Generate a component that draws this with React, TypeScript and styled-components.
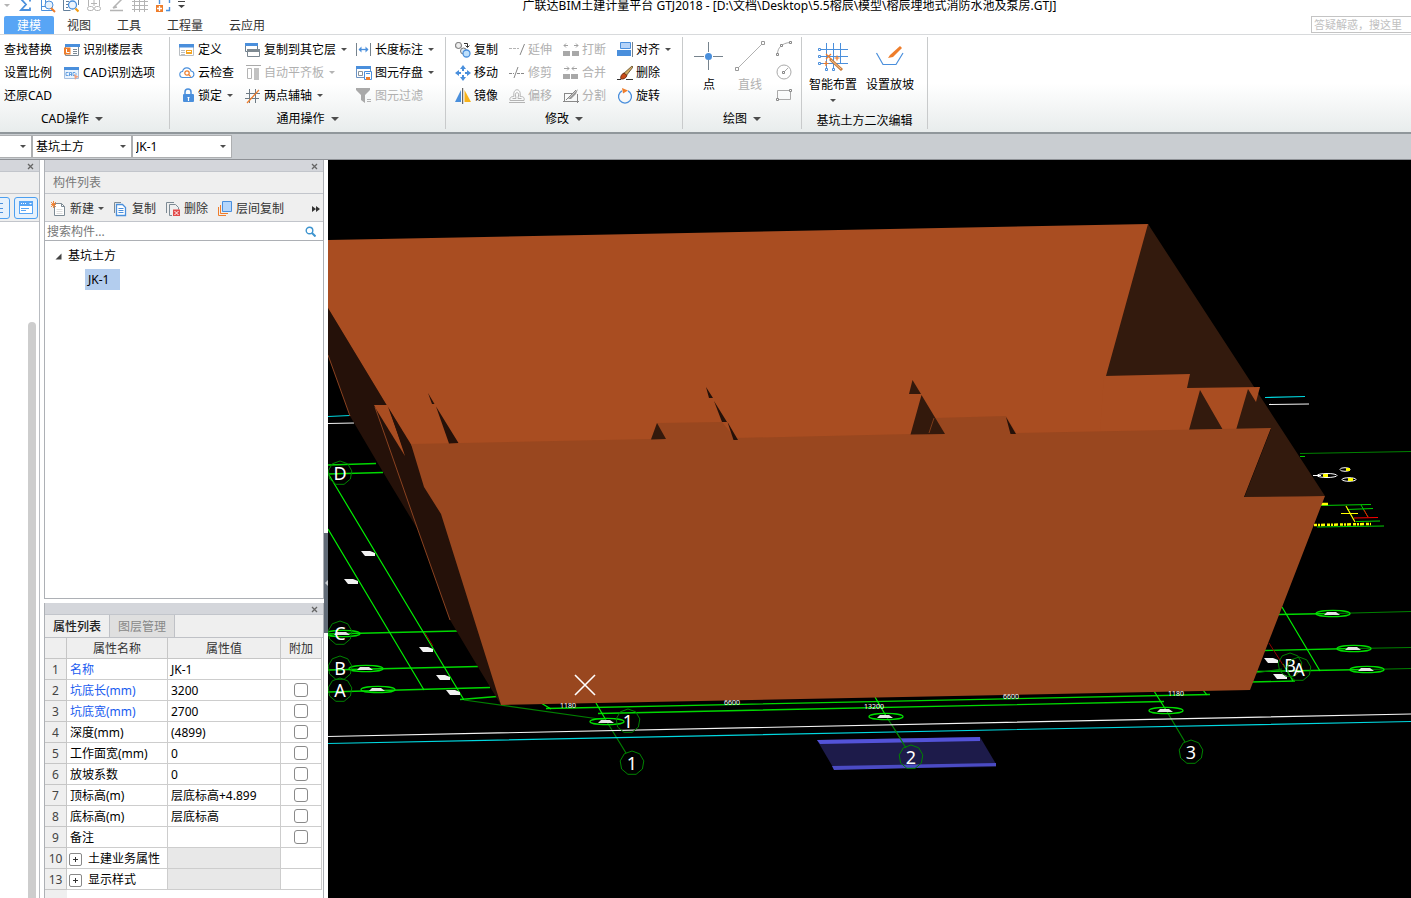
import React from "react";
import styled, { createGlobalStyle } from "styled-components";

const GlobalStyle = createGlobalStyle`
  *, *::before, *::after { box-sizing: border-box; }
  html, body { margin: 0; height: 100%; overflow: hidden; }
  body {
    background: #fff;
    color: #000;
    font: 12px/20px "Noto Sans", "Noto Sans CJK SC", sans-serif;
  }
  button, input, select { font: inherit; color: inherit; margin: 0; padding: 0; }
  button { background: none; border: 0; text-align: left; cursor: default; white-space: nowrap; }
  svg { display: block; flex: none; }
`;

const blue = "#4a8fdc";
const orange = "#ee7d2b";
const grey = "#b4b4b4";

/* ---------- shell ---------- */

const Shell = styled.div`
  display: flex;
  flex-direction: column;
  height: 100vh;
  overflow: hidden;
`;

const TitleBar = styled.header`
  display: flex;
  align-items: flex-end;
  height: 15px;
  flex: none;
`;

const QuickTools = styled.div`
  display: flex;
  align-items: center;
  gap: 7px;
  height: 20px;
  padding-left: 4px;
`;

const QuickButton = styled.button`
  display: flex;
  align-items: center;
  justify-content: center;
  height: 20px;
`;

const WindowTitle = styled.h1`
  flex: 1;
  margin: 0;
  padding-right: 17px;
  font-size: 12px;
  font-weight: 400;
  line-height: 18px;
  text-align: center;
  white-space: nowrap;
`;

const TabBar = styled.nav`
  display: flex;
  align-items: flex-end;
  height: 20px;
  flex: none;
  padding-left: 4px;
  border-bottom: 1px solid #d8dadc;
`;

const RibbonTab = styled.button<{ $active?: boolean }>`
  height: 18px;
  padding: 2px 13px 0;
  line-height: 16px;
  border-radius: 2px 2px 0 0;
  color: ${(p) => (p.$active ? "#fff" : "#333")};
  background: ${(p) => (p.$active ? "#58a5f5" : "transparent")};
`;

const HelpSearch = styled.input`
  width: 100px;
  height: 17px;
  margin: 0 0 1px auto;
  padding-left: 2px;
  border: 1px solid #c4c4c4;
  border-right: 0;
  border-radius: 0;
  font-size: 11px;
  &::placeholder { color: #c0c0c0; opacity: 1; }
`;

/* ---------- ribbon ---------- */

const Ribbon = styled.div`
  display: flex;
  height: 99px;
  flex: none;
  padding: 2px 0 3px;
  background: linear-gradient(#fff 50%, #e8ecec);
  border-bottom: 2px solid #90979b;
`;

const Group = styled.section<{ $width: number; $bleed?: boolean }>`
  display: flex;
  flex-direction: column;
  flex: none;
  width: ${(p) => p.$width}px;
  margin-left: ${(p) => (p.$bleed ? "-25px" : "0")};
  border-right: 1px solid #c8cacb;
`;

const GroupBody = styled.div<{ $columns: string; $pad: number }>`
  display: grid;
  grid-template-columns: ${(p) => p.$columns};
  grid-template-rows: repeat(3, 23px);
  grid-auto-flow: column;
  flex: none;
  padding: 1px 0 0 ${(p) => p.$pad}px;
`;

const GroupTitle = styled.button<{ $low?: boolean }>`
  display: flex;
  align-items: center;
  align-self: center;
  gap: 6px;
  height: 24px;
  flex: none;
  padding-top: ${(p) => (p.$low ? 4 : 0)}px;
`;

const Tool = styled.button`
  display: flex;
  align-items: center;
  gap: 3px;
  &:disabled { color: #b0b0b0; }
`;

const ToolLabel = styled.span`
  margin-right: 2px;
`;

const BigTools = styled.div<{ $pad: number; $gap: number }>`
  display: flex;
  gap: ${(p) => p.$gap}px;
  height: 70px;
  flex: none;
  padding-left: ${(p) => p.$pad}px;
`;

const BigTool = styled.button`
  display: flex;
  flex-direction: column;
  align-items: center;
  padding-top: 4px;
  &:disabled { color: #b0b0b0; }
`;

const BigLabel = styled.span`
  margin: 4px 0 4px;
`;

const SmallStack = styled.div`
  display: grid;
  grid-template-rows: repeat(3, 23px);
  align-items: center;
`;

/* ---------- selection bar ---------- */

const SelectBar = styled.div`
  display: flex;
  height: 26px;
  flex: none;
  padding-top: 1px;
  background: #c9cdd1;
  border-bottom: 1px solid #8e9196;
`;

const SelectBox = styled.label<{ $bleed?: boolean }>`
  display: grid;
  align-items: center;
  width: 100px;
  height: 23px;
  margin-left: ${(p) => (p.$bleed ? "-68px" : "0")};
  > * { grid-area: 1 / 1; }
  > svg { justify-self: end; margin-right: 6px; pointer-events: none; }
`;

const Select = styled.select`
  appearance: none;
  width: 100px;
  height: 23px;
  padding-left: 3px;
  background: #fff;
  border: 1px solid #adafb1;
  border-radius: 0;
`;

/* ---------- docked panels ---------- */

const Workspace = styled.main`
  display: flex;
  flex: 1;
  min-height: 0;
`;

const NavDock = styled.aside`
  display: flex;
  flex-direction: column;
  width: 40px;
  flex: none;
  overflow: hidden;
  border-right: 1px solid #b9bcc1;
`;

const Dock = styled.aside`
  display: flex;
  flex-direction: column;
  gap: 4px;
  width: 280px;
  margin-left: 4px;
  flex: none;
`;

const Panel = styled.section<{ $grow?: boolean }>`
  display: flex;
  flex-direction: column;
  flex: ${(p) => (p.$grow ? "1" : "none")};
  min-height: 0;
  border: 1px solid #adb0b5;
  border-top: 0;
  border-bottom-width: ${(p) => (p.$grow ? "1px" : "0")};
`;

const Strip = styled.div`
  display: flex;
  align-items: center;
  justify-content: flex-end;
  height: 12px;
  flex: none;
  padding: 2px 5px 0 0;
  background: #d4d6db;
  border-bottom: 1px solid #c2c5cb;
`;

const PanelTitle = styled.h2`
  height: 22px;
  flex: none;
  margin: 0;
  padding-left: 8px;
  font-size: 12px;
  font-weight: 400;
  line-height: 22px;
  color: #777;
  background: #efefef;
  border-bottom: 1px solid #c2c5cb;
`;

const PanelTools = styled.div`
  display: flex;
  align-items: center;
  height: 28px;
  flex: none;
  padding: 2px 0 0 6px;
  background: #efefef;
  border-bottom: 1px solid #c2c5cb;
  color: #333;
`;

const PanelTool = styled.button`
  display: flex;
  align-items: center;
  gap: 3px;
  margin-right: 9px;
`;

const ToolMenu = styled.span`
  padding-left: 1px;
`;

const MoreTools = styled.button`
  margin: 0 3px 0 auto;
`;

const NavTools = styled(PanelTools)`
  justify-content: flex-end;
  gap: 4px;
  padding: 0 1px 0 0;
`;

const NavToggle = styled.button`
  display: flex;
  align-items: center;
  justify-content: center;
  flex: none;
  width: 24px;
  height: 22px;
  background: #e6f1fc;
  border: 1px solid #4c9ff0;
  border-radius: 3px;
`;

const ScrollThumb = styled.div`
  flex: 1;
  width: 8px;
  margin: 100px 3px 0 auto;
  background: #cdcdcd;
  border-radius: 4px 4px 0 0;
`;

const SearchRow = styled.label`
  display: flex;
  align-items: center;
  height: 19px;
  flex: none;
  padding: 0 7px 0 2px;
  border-bottom: 1px solid #adb0b5;
`;

const SearchInput = styled.input`
  flex: 1;
  min-width: 0;
  height: 18px;
  padding-top: 2px;
  border: 0;
  outline: 0;
  &::placeholder { color: #777; opacity: 1; }
`;

const Tree = styled.ul`
  flex: 1;
  margin: 0;
  padding: 5px 0 0 10px;
  list-style: none;
`;

const TreeNode = styled.li`
  display: flex;
  align-items: center;
  gap: 6px;
  height: 20px;
`;

const TreeLeaf = styled.li`
  width: 35px;
  height: 21px;
  margin: 3px 0 0 30px;
  padding-left: 3px;
  line-height: 21px;
  background: #b3cdee;
`;

const SheetTabs = styled.div`
  display: flex;
  height: 22px;
  flex: none;
  background: #efefef;
`;

const SheetTab = styled.button<{ $active?: boolean }>`
  width: 65px;
  padding: 2px 0 0 8px;
  line-height: 20px;
  border-right: 1px solid #bfc1c6;
  font-weight: ${(p) => (p.$active ? 500 : 400)};
  color: ${(p) => (p.$active ? "#222" : "#888")};
  background: ${(p) => (p.$active ? "#efefef" : "#dfdfdf")};
`;

const SheetBody = styled.div`
  padding-bottom: 8px;
  border-top: 1px solid #bfc1c6;
  background: linear-gradient(to right, #efefef 22px, #fff 22px);
`;

const Sheet = styled.table`
  width: 277px;
  table-layout: fixed;
  border-collapse: separate;
  border-spacing: 0;
  background: #fff;
`;

const HeadCell = styled.th`
  height: 21px;
  padding: 2px 0 0;
  font-weight: 400;
  line-height: 18px;
  color: #333;
  background: #efefef;
  border: solid #c6c6c6;
  border-width: 0 1px 1px 0;
`;

const NumberCell = styled(HeadCell)`
  color: #444;
`;

const Cell = styled.td<{ $link?: boolean; $muted?: boolean }>`
  height: 21px;
  padding: 2px 0 0 3px;
  line-height: 18px;
  white-space: nowrap;
  color: ${(p) => (p.$link ? "#1a5cf0" : "#000")};
  background: ${(p) => (p.$muted ? "#e8e8e8" : "#fff")};
  border: solid #cdcdcd;
  border-width: 0 1px 1px 0;
`;

const CheckCell = styled(Cell)`
  padding-top: 0;
`;

const CheckBox = styled.input`
  display: block;
  appearance: none;
  width: 14px;
  height: 14px;
  margin: 0 0 0 10px;
  border: 1px solid #8a8a8a;
  border-radius: 3px;
  background: #fff;
`;

const ExpandRow = styled.div`
  display: flex;
  align-items: center;
  gap: 6px;
  margin-left: -1px;
`;

const ExpandButton = styled.button`
  display: flex;
  align-items: center;
  justify-content: center;
  width: 13px;
  height: 13px;
  border: 1px solid #888;
  border-radius: 2px;
`;

const Splitter = styled.div`
  width: 4px;
  flex: none;
  padding-top: 373px;
`;

const SplitHandle = styled.button`
  display: flex;
  align-items: center;
  justify-content: flex-end;
  width: 4px;
  height: 100px;
  background: #616b77;
`;

const Viewport = styled.div`
  flex: 1;
  min-width: 0;
  background: #000;
  > svg { width: 100%; height: 100%; }
`;

/* ---------- icons ---------- */

const Ico = ({ s = 16, children }: { s?: number; children: React.ReactNode }) => (
  <svg width={s} height={s} viewBox={`0 0 ${s} ${s}`} fill="none" aria-hidden="true">
    {children}
  </svg>
);

const Arrow = ({ big, light }: { big?: boolean; light?: boolean }) => (
  <svg width={big ? 8 : 6} height={big ? 4 : 3} viewBox="0 0 8 4" aria-hidden="true">
    <path d="M0 0h8L4 4z" fill={light ? grey : "#4d4d4d"} />
  </svg>
);

const CloseIcon = () => (
  <svg width="7" height="7" viewBox="0 0 7 7" stroke="#666" strokeWidth="1.3" aria-hidden="true">
    <path d="M1 1l5 5M6 1L1 6" />
  </svg>
);

const icons: Record<string, React.ReactNode> = {
  find: <path d="M1 3h14v10H1z" fill={blue} />,
  scale: <path d="M1 3h11v10H1z" stroke={blue} />,
  restore: <path d="M1 3h11v10H1z" stroke={blue} />,
  floors: (
    <>
      <path d="M1.500 2.500h13v11h-13z" stroke="#7d8a94" fill="#fff" />
      <path d="M1 2h15v3H1z" fill={blue} />
      <path d="M-.5 5.500h7v7h-7z" fill={orange} />
      <path d="M2.500 7v3.500h3" stroke="#fff" />
      <path d="M9 7.500h4M9 9.500h4M9 11.500h4" stroke="#7d8a94" />
    </>
  ),
  cadopt: (
    <>
      <path d="M.5 2.500h14v11H.5z" stroke="#a5bfe0" fill="#eaf3fd" />
      <path d="M0 2h15v3H0z" fill={blue} />
      <path d="M4.500 7.500H2v3h2.500M5.500 11V7.500h2V11M5.500 9.500h2M9 7.500h2l1 1v1l-1 1H9z" stroke={blue} strokeWidth=".8" />
      <path d="M10 9l5 3-2.500.7L11 15z" fill="#f0a080" />
    </>
  ),
  define: (
    <>
      <path d="M.5 2.500h14v11H.5z" stroke="#b9bec2" fill="#fff" />
      <path d="M0 2h15v3.500H0z" fill={blue} />
      <path d="M2 8.500h4M2 10.500h4M2 12.500h4" stroke="#b9bec2" />
      <path d="M7 8h6v4H7z" fill="#f5a623" />
      <path d="M8 9.500h4" stroke="#fff" />
    </>
  ),
  cloud: (
    <>
      <path d="M4 12.500a3 3 0 0 1-.4-6A4.300 4.300 0 0 1 12 6a3.300 3.300 0 0 1 .3 6.500z" stroke={blue} strokeWidth="1.100" />
      <circle cx="8" cy="8" r="2.200" stroke={orange} strokeWidth="1.200" />
      <path d="M9.700 9.700l2 2" stroke={orange} strokeWidth="1.200" />
    </>
  ),
  lock: (
    <>
      <path d="M6 7V4a3 3 0 0 1 6 0V7" stroke={blue} strokeWidth="1.500" />
      <rect x="4" y="6" width="11" height="8" rx="1" fill={blue} />
      <path d="M9.500 9v4M8.500 9.500h2" stroke="#fff" strokeWidth="1.200" />
    </>
  ),
  copyLayers: (
    <>
      <path d="M.5 1.500h12v8H.5z" stroke="#6e7f8e" fill="#fff" />
      <path d="M0 1h13v3H0z" fill={blue} />
      <path d="M2.500 7.500h12v7h-12z" stroke="#7b8791" fill="#fff" />
      <path d="M2 7h13v3H2z" fill="#7f8a92" />
    </>
  ),
  alignSlab: (
    <>
      <path d="M1 .5h15" stroke="#aaa" />
      <path d="M2.500 3.500h4v10h-4z" stroke="#b4b4b4" />
      <path d="M9 3h5v12H9z" fill="#c2c2c2" />
    </>
  ),
  axis: (
    <>
      <path d="M4.500 1v14M10.500 1v14M1 5.500h14M0 10.500h14" stroke="#6d7a84" />
      <path d="M2 15L14 2" stroke={orange} strokeWidth="1.200" />
    </>
  ),
  length: (
    <>
      <path d="M.5 1v13M14.500 1v13" stroke="#76838d" />
      <path d="M3 7.500h9" stroke={blue} strokeWidth="1.300" />
      <path d="M5.500 4.500l-3 3 3 3zM9.500 4.500l3 3-3 3z" fill={blue} />
    </>
  ),
  saveElem: (
    <>
      <path d="M.5 2.500h14v10H.5z" stroke="#6b93c4" fill="#fff" />
      <path d="M0 1h15v3H0z" fill={blue} />
      <path d="M2.500 6.500h4v4h-4z" stroke="#8a949c" />
      <path d="M8.500 6.500h7v8h-7z" stroke={blue} fill="#fff" />
      <path d="M10 12h4v3h-4z" fill={orange} />
      <path d="M10 8.500h4" stroke={blue} />
    </>
  ),
  filter: (
    <>
      <path d="M0 0h14v2L9 7v8L5 12V7L0 2z" fill="#a9a9a9" />
      <path d="M11 11.500h4M11 13.500h4" stroke="#b4b4b4" />
    </>
  ),
  copy: (
    <>
      <circle cx="3.500" cy="3.500" r="3" stroke="#888" strokeWidth="1.200" fill="#eee" />
      <circle cx="8.500" cy="9" r="3" stroke="#777" fill="#dfe9f2" />
      <circle cx="11.500" cy="11.500" r="3.500" stroke={blue} strokeWidth="1.300" fill="#bfe0fb" />
      <path d="M9 1.500h3.500V5M10.500 3.500l2 2 2-2" stroke="#333" />
    </>
  ),
  move: (
    <path
      d="M8 0l3 4H9v2H7V4H5zM8 16l-3-4h2v-2h2v2h2zM0 8l4-3v2h2v2H4v2zM16 8l-4 3V9h-2V7h2V5z"
      fill={blue}
    />
  ),
  mirror: (
    <>
      <path d="M6 2v12H0z" fill={blue} />
      <path d="M9.500 2v12H16z" fill="#f9b31a" />
      <path d="M7.700 0v16" stroke="#444" />
    </>
  ),
  extend: (
    <>
      <path d="M0 6.500h10" stroke={grey} strokeDasharray="3 1" />
      <path d="M15.500 2l-4.500 11" stroke="#888" />
    </>
  ),
  trim: (
    <>
      <path d="M0 8.500h5M8 8.500h8" stroke="#888" strokeDasharray="3 1" />
      <path d="M9 2L5 13" stroke="#888" />
    </>
  ),
  offset: (
    <>
      <path d="M1 12.500c-1-4 3-4 4-4-2-9 8-9 6 0 2 0 5 0 4 4z" stroke={grey} />
      <path d="M3.500 10.500h3.500c0-2-1-3-.5-5 .7-1 2.300-1 3 0 .5 2-.5 3-.5 5h3.500M0 14.500h16" stroke={grey} />
    </>
  ),
  breakUp: (
    <>
      <path d="M0 9h7v5H0zM9 9h7v5H9z" fill="#a8a8a8" />
      <path d="M1 3.500h4M11 3.500h4M3 1.500l-2 2 2 2M13 1.500l2 2-2 2" stroke="#a0a0a0" />
    </>
  ),
  merge: (
    <>
      <path d="M0 9h7v5H0zM8 9h7v5H8z" fill="#a8a8a8" />
      <path d="M1 3.500h5M9 3.500h5M4 1.500l2 2-2 2M11 1.500l-2 2 2 2" stroke="#a0a0a0" />
    </>
  ),
  split: (
    <>
      <path d="M1 5.500h9M1.500 5v8M0 13.500h16M14.500 6v9M3 12L13 2" stroke="#888" />
      <path d="M5 11l6-6 4-4-2 5-5 5z" fill="#999" />
    </>
  ),
  align: (
    <>
      <path d="M3.500.5h10v6h-10z" stroke={blue} fill="#b5d3f8" />
      <path d="M0 8h14v6H0z" fill={blue} />
      <path d="M15.500 0v15" stroke="#76838d" />
    </>
  ),
  erase: (
    <>
      <path d="M0 14.500h4M9 14.500h7" stroke="#333" />
      <path d="M15 1l1 1-7 9-3-2z" fill="#d0a860" stroke="#5c4522" strokeWidth=".8" />
      <path d="M7 8l3 2.500c-1 3-4 4-6 3.500-1-1 0-5 3-6z" fill="#c94a17" stroke="#5a260f" strokeWidth=".8" />
    </>
  ),
  rotate: (
    <>
      <path d="M11 2.800a6.500 6.500 0 1 1-6 0" stroke={blue} strokeWidth="1.300" />
      <path d="M5 0l6 2.500L6 5.500z" fill={orange} />
    </>
  ),
  arc: (
    <>
      <path d="M1.500 13C1.500 7 6 2 14 1.500" stroke="#a8a8a8" />
      <path d="M.5 12.500h2v2h-2zM4.500 3.500h2v2h-2zM13.500.5h2v2h-2z" stroke="#888" fill="#fff" />
    </>
  ),
  circle: (
    <>
      <circle cx="8" cy="8" r="7" stroke="#aaa" />
      <path d="M8 8l4-4" stroke="#aaa" />
      <path d="M6.500 7.500h2v2h-2z" stroke="#888" fill="#fff" />
    </>
  ),
  rect: (
    <>
      <path d="M1.500 3.500h13v9h-13z" stroke="#aaa" />
      <path d="M.5 11.500h2v2h-2zM13.500 2.500h2v2h-2z" stroke="#888" fill="#fff" />
    </>
  ),
  sum: <path d="M13 4.500V2H4l5 5.500L4 13h9v-2.500" stroke={blue} strokeWidth="1.800" />,
  view: (
    <>
      <path d="M1.500 1v12.500h12M5.500 1v8M1 9.500h5" stroke={blue} />
      <circle cx="9" cy="8" r="4" stroke={blue} fill="#e6f1fc" />
      <path d="M11 11l4 4" stroke={orange} strokeWidth="2" />
    </>
  ),
  inspect: (
    <>
      <path d="M.5 1v12.500h7M15.500 1v7M3 4.500h3M3 7.500h2M3 10.500h2" stroke="#64809c" />
      <circle cx="9.500" cy="8" r="4" stroke={blue} strokeWidth="1.300" fill="#eef5fd" />
      <path d="M12.500 11.500l3 3" stroke="#f39c12" strokeWidth="2.200" />
    </>
  ),
  link: (
    <>
      <path d="M2.500 1v8M13.500 1v8M5 6.500h6M8 2v7" stroke={grey} />
      <rect x="1.500" y="9.500" width="6" height="4" rx="2" stroke={grey} />
      <rect x="8.500" y="9.500" width="6" height="4" rx="2" stroke={grey} />
    </>
  ),
  level: <path d="M1 13.500h13M4 11l9-9M4 11l4-1" stroke={grey} strokeWidth="1.500" />,
  grid: <path d="M2.500 0v15M7.500 0v15M12.500 0v15M0 4.500h16M0 8.500h16M0 12.500h16" stroke={grey} />,
  add: (
    <>
      <path d="M4.500 7V2.500M11 13.500h3.500V10M14.500 6V1.500H11" stroke={blue} strokeWidth="1.400" />
      <path d="M1 8h7v7H1z" fill={orange} />
      <path d="M4.500 9v5M2 11.500h5" stroke="#fff" strokeWidth="1.300" />
    </>
  ),
  newDoc: (
    <>
      <path d="M3.500 2.500h7l3 3v9h-10z" stroke="#7d8a94" fill="#fff" />
      <path d="M10.500 2.500v3h3" stroke="#7d8a94" />
      <path d="M5.500 8.500h6M5.500 10.500h6M5.500 12.500h6" stroke="#ddd" />
      <path d="M0 1l5 5M5 1L0 6M2.500 0v7M0 3.500h5" stroke={orange} strokeWidth=".9" />
    </>
  ),
  copyDoc: (
    <>
      <path d="M1.500 12V1.500H8" stroke="#7d8a94" />
      <path d="M3.500 3.500h6l3 3v8h-9z" stroke={blue} fill="#fff" strokeWidth="1.300" />
      <path d="M5.500 7.500h5M5.500 9.500h5M5.500 11.500h5" stroke={blue} />
    </>
  ),
  deleteDoc: (
    <>
      <path d="M1.500 12V1.500H9M4.500 14.500v-11h6l3 3v2M4.500 14.500H7" stroke="#7d8a94" />
      <path d="M8 8.500h7V15H8z" fill="#e24b4b" />
      <path d="M9.500 10l4 4M13.500 10l-4 4" stroke="#fff" />
    </>
  ),
  layerCopy: (
    <>
      <path d="M1.500 6v8.500H9M3.500 4v8.500H11" stroke={orange} />
      <path d="M5.500.5h9v10h-9z" stroke={blue} fill="#b5d6fb" />
    </>
  ),
};

const Icon = ({ name }: { name: string }) => <Ico>{icons[name]}</Ico>;

/* ---------- data ---------- */

type ToolDef = [icon: string, label: string, opts?: { menu?: boolean; off?: boolean }];

const cadTools: ToolDef[] = [
  ["find", "查找替换"],
  ["scale", "设置比例"],
  ["restore", "还原CAD"],
  ["floors", "识别楼层表"],
  ["cadopt", "CAD识别选项"],
];

const commonTools: ToolDef[] = [
  ["define", "定义"],
  ["cloud", "云检查"],
  ["lock", "锁定", { menu: true }],
  ["copyLayers", "复制到其它层", { menu: true }],
  ["alignSlab", "自动平齐板", { menu: true, off: true }],
  ["axis", "两点辅轴", { menu: true }],
  ["length", "长度标注", { menu: true }],
  ["saveElem", "图元存盘", { menu: true }],
  ["filter", "图元过滤", { off: true }],
];

const editTools: ToolDef[] = [
  ["copy", "复制"],
  ["move", "移动"],
  ["mirror", "镜像"],
  ["extend", "延伸", { off: true }],
  ["trim", "修剪", { off: true }],
  ["offset", "偏移", { off: true }],
  ["breakUp", "打断", { off: true }],
  ["merge", "合并", { off: true }],
  ["split", "分割", { off: true }],
  ["align", "对齐", { menu: true }],
  ["erase", "删除"],
  ["rotate", "旋转"],
];

const Tools = ({ items }: { items: ToolDef[] }) => (
  <>
    {items.map(([icon, label, o]) => (
      <Tool key={label} disabled={o?.off}>
        <Icon name={icon} />
        <ToolLabel>{label}</ToolLabel>
        {o?.menu && <Arrow light={o.off} />}
      </Tool>
    ))}
  </>
);

interface PropRow {
  n: number;
  name: string;
  value?: string;
  link?: boolean;
  check?: boolean;
  expand?: boolean;
}

const rows: PropRow[] = [
  { n: 1, name: "名称", value: "JK-1", link: true },
  { n: 2, name: "坑底长(mm)", value: "3200", link: true, check: true },
  { n: 3, name: "坑底宽(mm)", value: "2700", link: true, check: true },
  { n: 4, name: "深度(mm)", value: "(4899)", check: true },
  { n: 5, name: "工作面宽(mm)", value: "0", check: true },
  { n: 6, name: "放坡系数", value: "0", check: true },
  { n: 7, name: "顶标高(m)", value: "层底标高+4.899", check: true },
  { n: 8, name: "底标高(m)", value: "层底标高", check: true },
  { n: 9, name: "备注", check: true },
  { n: 10, name: "土建业务属性", expand: true },
  { n: 13, name: "显示样式", expand: true },
];

/* ---------- 3D scene ---------- */

const G = "#00f000";
const DG = "#008400";

type Seg = [number, number, number, number];

const axisLines: Seg[] = [
  [328, 465, 376, 463.5],
  [328, 474, 383, 472.5],
  [328, 634, 457, 631],
  [328, 670, 478, 666.5],
  [328, 692, 490, 687.5],
  [460, 699.5, 497, 696.5],
  [546, 708.5, 1210, 694.5],
  [598, 713.5, 1164, 701.5],
  [1278, 614.5, 1333, 613.5],
  [1264, 650.5, 1354, 648.5],
  [1255, 671.5, 1367, 669.5],
  [1250, 682, 1295, 681],
];

const diagonals: Seg[] = [
  [329, 475, 464, 700],
  [328, 529, 424, 690],
  [541, 703, 551, 709],
  [1282, 607, 1320, 671],
  [1203, 690, 1207, 695],
  [596, 703, 607, 722],
  [875, 697, 886, 716],
  [1154, 691, 1166, 710],
  [1283, 664, 1293, 681],
];

const leaders: Seg[] = [
  [464, 700, 606, 720],
  [607, 722, 626, 753],
  [886, 716, 906, 747],
  [1166, 710, 1185, 742],
  [1300, 453.5, 1411, 451.5],
  [1255, 673, 1282, 669],
  [1333, 613.5, 1411, 611.5],
  [1354, 648.5, 1411, 647.5],
  [1367, 669.5, 1411, 668.5],
];

const ellipses: [number, number][] = [
  [343, 633],
  [366, 668],
  [378, 689],
  [607, 721],
  [886, 716],
  [1166, 710],
  [1333, 613],
  [1354, 648],
  [1367, 669],
];

const bubbles: [number, number, string][] = [
  [340, 473, "D"],
  [340, 633, "C"],
  [340, 668, "B"],
  [340, 690, "A"],
  [628, 721, "1"],
  [632, 763, "1"],
  [911, 757, "2"],
  [1191, 752, "3"],
  [1290, 665, "B"],
  [1299, 669, "A"],
];

const marks: [number, number][] = [
  [368, 554],
  [351, 582],
  [426, 650],
  [443, 678],
  [453, 693],
  [1271, 661],
  [1280, 677],
];

const dims: [number, number, string][] = [
  [568, 708, "1180"],
  [732, 705, "6600"],
  [874, 709, "13200"],
  [1011, 699, "6600"],
  [1176, 696, "1180"],
];

const seg = ([x1, y1, x2, y2]: Seg) => `M${x1} ${y1}L${x2} ${y2}`;
const path = (list: Seg[]) => list.map(seg).join("");

const nonagon = (cx: number, cy: number) =>
  Array.from({ length: 9 }, (_, i) => {
    const a = (i * 2 * Math.PI) / 9 - Math.PI / 2;
    return `${(cx + 12 * Math.cos(a)).toFixed(1)},${(cy + 12 * Math.sin(a)).toFixed(1)}`;
  }).join(" ");

const Scene = () => (
  <svg viewBox="328 160 1083 738" preserveAspectRatio="xMinYMin slice" fill="none" role="img" aria-label="基坑土方三维视图">
    <path d={path(axisLines)} stroke="#00d800" strokeWidth="1.300" />
    <path d={path(diagonals)} stroke={G} strokeWidth="1.200" />
    <path d={path(leaders)} stroke="#008000" strokeWidth="1.200" />
    <path d="M425 633l8 13M1269 643l16 25" stroke="#900000" />
    <path d="M328 416.500L350 415.500M1265 397.500l40-1M328 743.500L1411 721.500" stroke="#00d8e0" strokeWidth="1.200" />
    <path d="M328 423.500l26-.5M1269 404.500l40-.5M328 736.500L1411 714" stroke="#f4f4f4" strokeWidth="1.200" />
    <path d="M1320 505.500l51-1M1347 509.500l26-1M1361 505l7 12M1356 521.500l24-.5M1317 527l67-1M1300 456.500h5" stroke="#00d000" />
    <path d="M1354 518l24-.5M1364 510l4 7" stroke="#f00" />
    <path d="M1346 506l9 16M1341 513.500h17" stroke="#ff0" strokeWidth="1.200" />
    <path d="M1314 525l57-1" stroke="#ff0" strokeWidth="2.500" strokeDasharray="3 1 2 1 4 2" />
    <path d="M1320 504h8" stroke="#ff0" strokeWidth="2.500" />
    <path d="M1313 475.500h8" stroke="#fff" />
    <ellipse cx="1345" cy="469.500" rx="5" ry="1.800" stroke="#fff" />
    <ellipse cx="1327" cy="475.500" rx="10" ry="2" stroke="#fff" />
    <ellipse cx="1349" cy="479.500" rx="7" ry="1.800" stroke="#fff" />
    <path d="M1346 469.500h4M1323 475.500h5M1348 479.500h5" stroke="#ff0" strokeWidth="3" />

    <path d="M817 740L980 737L996 764V767L834 769z" fill="#1d1b4a" />
    <path d="M817 740L980 737V741L820 744z" fill="#5353d8" />
    <path d="M832 766L996 763V766L834 770z" fill="#4b4bc4" />
    <path d="M895 730L906 748" stroke="#008000" strokeWidth="1.200" />

    {ellipses.map(([x, y]) => (
      <g key={`${x}-${y}`}>
        <ellipse cx={x} cy={y + 0.5} rx="17" ry="3.2" stroke="#00e000" strokeWidth="1.300" />
        <path d={`M${x - 9} ${y + 2}l3-3h9l4 3z`} fill="#e4e4e4" />
      </g>
    ))}
    {marks.map(([x, y]) => (
      <path key={`${x}-${y}`} d={`M${x - 7} ${y - 3}h9l5 2v3h-10z`} fill="#f2f2f2" />
    ))}

    {/* pit shell: left slope, back faces, right slope, front face */}
    <path d="M328 308V355L350 416L383 472L418 530L450 620L478 667L501 705L460 500L411 440L386 404z" fill="#251109" />
    <path d="M328 240L1148 224L1240 430L411 446L386 404L328 308z" fill="#a94d21" />
    <path d="M374 405H387L389 408L405 456L376 409z" fill="#a94d21" />
    <path d="M388 407L412 446L406 456z" fill="#251109" />
    <path d="M328 355L350 416M375 407L418 530L450 620" stroke="#8a4220" />
    <path d="M1148 224L1325 496L1244 498L1271 429L1180 430L1106 376z" fill="#331a0d" />
    <path d="M1104 376L1190 374L1187 388L1260 387L1256 402L1248 389L1236 430L1223 430L1200 390L1189 430L1100 432z" fill="#a94d21" />
    <path
      d="M411 444L651 439L657 423L722 422L735 438L911 434L934 418L1006 416L1016 433L1271 428L1244 497L1325 496L1250 690L501 705L441 514L424 487z"
      fill="#99471f"
    />
    <path
      d="M657 423L651 439.500L666 439zM912.500 380L909 394H921zM921.500 395L910.500 434.500L945 434z"
      fill="#33190c"
    />
    <path
      d="M706 387L709 398H713zM714 401L722 422H727zM727.500 422L733.500 440H738zM1006 417L1010.500 434H1016zM428 393L432 404H434.500zM436 406.500L449 443.500L458.500 443z"
      fill="#251109"
    />
    <path d="M934 418L929 433" stroke="#7a3a19" />

    <path d="M575 675l20 20M595 675l-20 20" stroke="#fff" strokeWidth="1.600" />

    <g fontFamily='"Noto Sans", sans-serif' textAnchor="middle" fill="#fff">
      {dims.map(([x, y, t]) => (
        <text key={x} x={x} y={y} fontSize="7">
          {t}
        </text>
      ))}
      {bubbles.map(([x, y, t]) => (
        <g key={`${x}-${y}`}>
          <polygon points={nonagon(x, y)} stroke={DG} fill="none" />
          <text x={x} y={y + 7} fontSize="18">
            {t}
          </text>
        </g>
      ))}
    </g>
  </svg>
);

/* ---------- page ---------- */

const quick = ["sum", "view", "inspect", "link", "level", "grid", "add"];
const tabs = ["建模", "视图", "工具", "工程量", "云应用"];

const Combo = ({ label, value, bleed }: { label: string; value: string; bleed?: boolean }) => (
  <SelectBox $bleed={bleed}>
    <Select aria-label={label} defaultValue={value}>
      <option>{value}</option>
    </Select>
    <Arrow />
  </SelectBox>
);

export default function App() {
  return (
    <Shell>
      <GlobalStyle />
      <TitleBar>
        <QuickTools>
          <QuickButton aria-label="更多">
            <Arrow light />
          </QuickButton>
          {quick.map((q) => (
            <QuickButton key={q} aria-label={q}>
              <Icon name={q} />
            </QuickButton>
          ))}
          <QuickButton aria-label="自定义">
            <svg width="7" height="8" viewBox="0 0 7 8" aria-hidden="true">
              <path d="M0 0h7v1H0zM0 4h7L3.500 7z" fill="#444" />
            </svg>
          </QuickButton>
        </QuickTools>
        <WindowTitle>
          {"广联达BIM土建计量平台 GTJ2018 - [D:\\文档\\Desktop\\5.5榕辰\\模型\\榕辰埋地式消防水池及泵房.GTJ]"}
        </WindowTitle>
      </TitleBar>

      <TabBar>
        {tabs.map((t, i) => (
          <RibbonTab key={t} $active={i === 0}>
            {t}
          </RibbonTab>
        ))}
        <HelpSearch aria-label="答疑解惑" placeholder="答疑解惑，搜这里" />
      </TabBar>

      <Ribbon>
        <Group $width={195} $bleed>
          <GroupBody $columns="79px 1fr" $pad={10}>
            <Tools items={cadTools} />
          </GroupBody>
          <GroupTitle>
            CAD操作 <Arrow big />
          </GroupTitle>
        </Group>
        <Group $width={276}>
          <GroupBody $columns="66px 111px 1fr" $pad={9}>
            <Tools items={commonTools} />
          </GroupBody>
          <GroupTitle>
            通用操作 <Arrow big />
          </GroupTitle>
        </Group>
        <Group $width={237}>
          <GroupBody $columns="54px 54px 54px 1fr" $pad={9}>
            <Tools items={editTools} />
          </GroupBody>
          <GroupTitle>
            修改 <Arrow big />
          </GroupTitle>
        </Group>
        <Group $width={119}>
          <BigTools $pad={11} $gap={11}>
            <BigTool>
              <Ico s={30}>
                <path d="M14.500 1v10M14.500 19v10M0 15.500h10M19 15.500h10" stroke="#76838d" />
                <circle cx="14.500" cy="15.500" r="3.500" fill={blue} />
              </Ico>
              <BigLabel>点</BigLabel>
            </BigTool>
            <BigTool disabled>
              <Ico s={30}>
                <path d="M3 27L27 3" stroke="#b0b0b0" />
                <path d="M.5 26.500h3v3h-3zM26.500.5h3v3h-3z" stroke="#999" fill="#fff" />
              </Ico>
              <BigLabel>直线</BigLabel>
            </BigTool>
            <SmallStack>
              <Tool disabled aria-label="弧线">
                <Icon name="arc" />
              </Tool>
              <Tool disabled aria-label="圆">
                <Icon name="circle" />
              </Tool>
              <Tool disabled aria-label="矩形">
                <Icon name="rect" />
              </Tool>
            </SmallStack>
          </BigTools>
          <GroupTitle>
            绘图 <Arrow big />
          </GroupTitle>
        </Group>
        <Group $width={126}>
          <BigTools $pad={7} $gap={9}>
            <BigTool>
              <Ico s={30}>
                <path d="M2 8.500h28M2 15.500h28M2 22.500h28M8.500 2v26M15.500 2v26M22.500 2v20" stroke={blue} />
                <path d="M.5 7.500h2v2h-2zM.5 14.500h2v2h-2zM.5 21.500h2v2h-2zM7.500 27.500h2v2h-2zM14.500 27.500h2v2h-2z" stroke={blue} fill="#fff" />
                <path d="M12 18l12 11" stroke="#c77d3e" strokeWidth="3" />
                <path d="M13 19l10 9" stroke="#f6c391" />
                <path d="M8 13l5 5M13 13l-5 5M19 14.500v5M16.500 17h5M8 20v5M5.500 22.500h5" stroke={orange} strokeWidth="1.200" />
              </Ico>
              <BigLabel>智能布置</BigLabel>
              <Arrow />
            </BigTool>
            <BigTool>
              <Ico s={30}>
                <path d="M1.500 12L8 23.500h13L28 12" stroke={blue} strokeWidth="1.200" />
                <path d="M25 5l2 2-9 9-5 1 2-3z" fill={orange} />
              </Ico>
              <BigLabel>设置放坡</BigLabel>
            </BigTool>
          </BigTools>
          <GroupTitle $low>基坑土方二次编辑</GroupTitle>
        </Group>
      </Ribbon>

      <SelectBar>
        <Combo label="楼层" value="" bleed />
        <Combo label="构件类型" value="基坑土方" />
        <Combo label="构件" value="JK-1" />
      </SelectBar>

      <Workspace>
        <NavDock>
          <Strip>
            <button aria-label="关闭">
              <CloseIcon />
            </button>
          </Strip>
          <PanelTitle />
          <NavTools>
            <NavToggle aria-label="列表">
              <Ico>
                <path d="M4 3.500h9M4 8.500h9M4 12.500h9" stroke={blue} />
              </Ico>
            </NavToggle>
            <NavToggle aria-label="卡片">
              <Ico>
                <path d="M1 1h14v13H1z" fill="#58a5f5" />
                <path d="M2 6h12v7H2z" fill="#fff" />
                <path d="M3 3.500h6" stroke="#fff" strokeDasharray="1 1" />
                <path d="M11 3h3l-1.500 1.500z" fill="#fff" />
                <path d="M3 8.500h8M3 10.500h5" stroke="#58a5f5" />
              </Ico>
            </NavToggle>
          </NavTools>
          <ScrollThumb />
        </NavDock>

        <Dock>
          <Panel $grow>
            <Strip>
              <button aria-label="关闭">
                <CloseIcon />
              </button>
            </Strip>
            <PanelTitle>构件列表</PanelTitle>
            <PanelTools>
              <PanelTool>
                <Icon name="newDoc" />
                新建
                <ToolMenu>
                  <Arrow />
                </ToolMenu>
              </PanelTool>
              <PanelTool>
                <Icon name="copyDoc" />
                复制
              </PanelTool>
              <PanelTool>
                <Icon name="deleteDoc" />
                删除
              </PanelTool>
              <PanelTool>
                <Icon name="layerCopy" />
                层间复制
              </PanelTool>
              <MoreTools aria-label="更多">
                <svg width="8" height="6" viewBox="0 0 8 6" aria-hidden="true">
                  <path d="M0 0l4 3-4 3zM4 0l4 3-4 3z" fill="#333" />
                </svg>
              </MoreTools>
            </PanelTools>
            <SearchRow>
              <SearchInput aria-label="搜索构件" placeholder="搜索构件..." />
              <svg width="11" height="11" viewBox="0 0 11 11" fill="none" aria-hidden="true">
                <circle cx="4.500" cy="4.500" r="3.300" stroke="#3d94cf" strokeWidth="1.400" />
                <path d="M7 7l3.500 3.500" stroke="#3d94cf" strokeWidth="2" />
              </svg>
            </SearchRow>
            <Tree>
              <TreeNode>
                <svg width="7" height="7" viewBox="0 0 7 7" aria-hidden="true">
                  <path d="M6.500.5v6h-6z" fill="#444" />
                </svg>
                基坑土方
              </TreeNode>
              <TreeLeaf>JK-1</TreeLeaf>
            </Tree>
          </Panel>

          <Panel>
            <Strip>
              <button aria-label="关闭">
                <CloseIcon />
              </button>
            </Strip>
            <SheetTabs>
              <SheetTab $active>属性列表</SheetTab>
              <SheetTab>图层管理</SheetTab>
            </SheetTabs>
            <SheetBody>
              <Sheet>
                <colgroup>
                  <col width="22" />
                  <col width="101" />
                  <col width="113" />
                  <col width="41" />
                </colgroup>
                <thead>
                  <tr>
                    <HeadCell />
                    <HeadCell scope="col">属性名称</HeadCell>
                    <HeadCell scope="col">属性值</HeadCell>
                    <HeadCell scope="col">附加</HeadCell>
                  </tr>
                </thead>
                <tbody>
                  {rows.map((r) => (
                    <tr key={r.n}>
                      <NumberCell scope="row">{r.n}</NumberCell>
                      <Cell $link={r.link}>
                        {r.expand ? (
                          <ExpandRow>
                            <ExpandButton aria-label={`展开${r.name}`}>
                              <svg width="7" height="7" viewBox="0 0 7 7" stroke="#333" aria-hidden="true">
                                <path d="M3.500 1v5M1 3.500h5" />
                              </svg>
                            </ExpandButton>
                            {r.name}
                          </ExpandRow>
                        ) : (
                          r.name
                        )}
                      </Cell>
                      <Cell $muted={r.expand}>{r.value}</Cell>
                      <CheckCell>
                        {r.check && <CheckBox type="checkbox" aria-label={`附加${r.name}`} />}
                      </CheckCell>
                    </tr>
                  ))}
                </tbody>
              </Sheet>
            </SheetBody>
          </Panel>
        </Dock>

        <Splitter>
          <SplitHandle aria-label="折叠面板">
            <svg width="3" height="6" viewBox="0 0 3 6" aria-hidden="true">
              <path d="M3 0v6L0 3z" fill="#c9cdd1" />
            </svg>
          </SplitHandle>
        </Splitter>

        <Viewport>
          <Scene />
        </Viewport>
      </Workspace>
    </Shell>
  );
}
